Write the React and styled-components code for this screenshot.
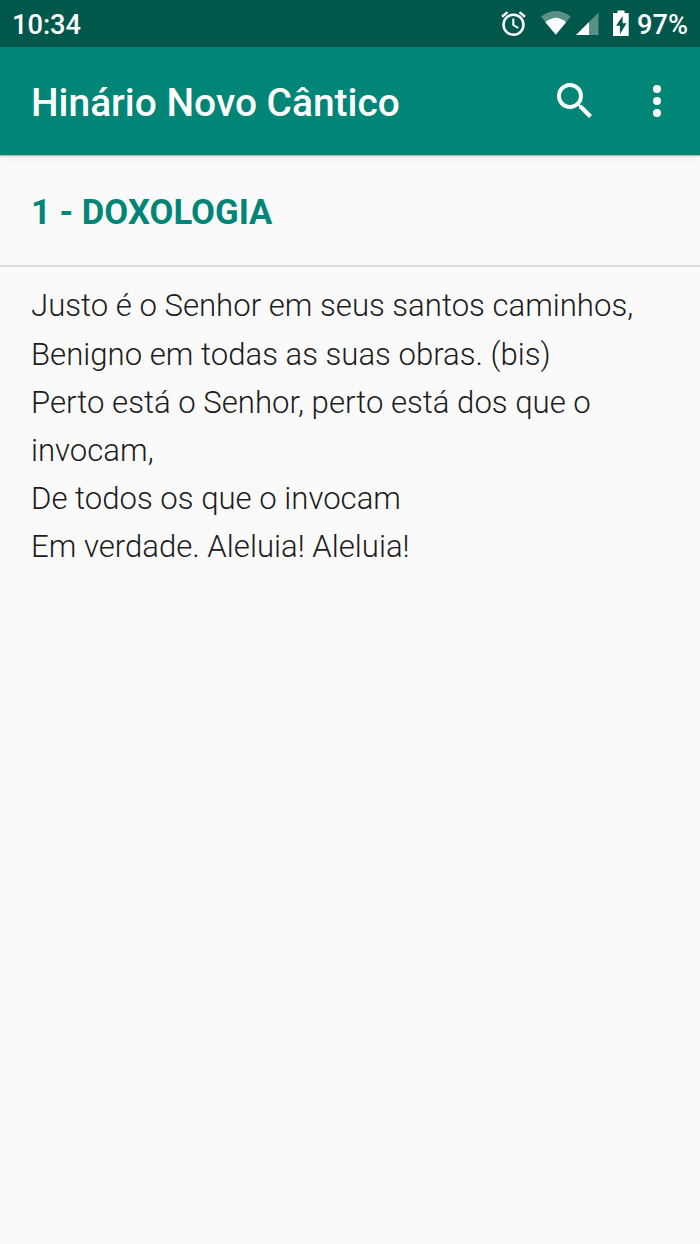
import styled, { createGlobalStyle } from 'styled-components';

const GlobalStyle = createGlobalStyle`
  body {
    margin: 0;
    background: #fafafa;
    font-family: Roboto, sans-serif;
  }
`;

const Screen = styled.div`
  display: flex;
  flex-direction: column;
  height: 1244px;
  overflow: hidden;
  background: #fafafa;
`;

// Barra de estado
const StatusBar = styled.div`
  display: flex;
  align-items: center;
  justify-content: space-between;
  height: 47px;
  padding: 0 12px;
  box-sizing: border-box;
  background: #00574b;
  color: #fff;
`;

const StatusText = styled.span`
  font-size: 27.2px;
  font-weight: 500;
  line-height: 47px;
  padding-top: 3px;
`;

const StatusIcons = styled.div`
  display: flex;
  align-items: center;

  svg {
    display: block;
  }
`;

const TopBar = styled.header`
  display: flex;
  align-items: center;
  height: 108px;
  padding: 0 19px 0 31px;
  box-sizing: border-box;
  background: #008577;
  color: #fff;
  box-shadow: 0 1px 1px rgba(0, 0, 0, 0.25), 0 2px 8px rgba(0, 0, 0, 0.08);
  z-index: 1;
`;

const Title = styled.h1`
  flex: 1;
  margin: 0;
  padding-top: 3px;
  font-size: 38.9px;
  font-weight: 500;
`;

const IconButton = styled.button`
  display: flex;
  padding: 0;
  margin-left: 34px;
  border: 0;
  background: none;
  color: #fff;
`;

// Título del himno
const HymnTitle = styled.h2`
  margin: 0;
  height: 112px;
  padding: 2px 31px 0;
  box-sizing: border-box;
  line-height: 111px;
  font-size: 34.7px;
  font-weight: 700;
  color: #008577;
  border-bottom: 2px solid #dcdcdc;
`;

const Lyrics = styled.div`
  padding: 15px 31px;
`;

const Line = styled.p`
  margin: 0;
  font-size: 31.13px;
  font-weight: 300;
  line-height: 48px;
  color: #1c1c1c;

  &:first-child {
    margin-bottom: 1px;
  }
`;

const lines = [
  'Justo é o Senhor em seus santos caminhos,',
  'Benigno em todas as suas obras. (bis)',
  'Perto está o Senhor, perto está dos que o invocam,',
  'De todos os que o invocam',
  'Em verdade. Aleluia! Aleluia!',
];

const StatusGlyphs = () => (
  <svg width="137" height="47" viewBox="500 0 137 47" fill="#fff">
    <g fill="none" stroke="#fff" strokeWidth="2.5">
      <circle cx="513.5" cy="24.7" r="10" />
      <path d="M513.300 18.500v6.500l5 3" strokeWidth="2" />
      <path d="M502 16.700l5.500-4.600M525 16.700l-5.500-4.600" />
    </g>
    <path d="M541 16.500Q555.800 5.500 570.800 16.500L566 22.300Q555.800 13 545.500 22.300Z" opacity="0.35" />
    <path d="M545.300 22.300Q555.800 13 566.200 22.300L555.800 34.700Z" />
    <path d="M598.500 12.500v22.500h-9.500v-13z" opacity="0.35" />
    <path d="M589 22v13h-13z" />
    <path d="M617.500 10.500h7v2.500h4.200v23h-15.700V13h4.500z" />
    <path d="M622.600 16v7.200h3.800l-6.500 11v-8.400h-3.800z" fill="#00574b" />
  </svg>
);

const SearchIcon = () => (
  <svg width="48" height="48" viewBox="0 0 24 24" fill="currentColor">
    <path d="M15.500 14h-.79l-.28-.27A6.471 6.471 0 0 0 16 9.500 6.500 6.500 0 1 0 9.500 16c1.610 0 3.090-.59 4.230-1.570l.27.28v.79l5 4.990L20.490 19l-4.990-5zm-6 0C7.010 14 5 11.990 5 9.500S7.010 5 9.500 5 14 7.010 14 9.500 11.990 14 9.500 14z" />
  </svg>
);

const MoreIcon = () => (
  <svg width="48" height="48" viewBox="0 0 24 24" fill="currentColor">
    <circle cx="12" cy="6" r="2" />
    <circle cx="12" cy="12" r="2" />
    <circle cx="12" cy="18" r="2" />
  </svg>
);

const App = () => {
  return (
    <>
      <GlobalStyle />
      <Screen>
        <StatusBar>
          <StatusText>10:34</StatusText>
          <StatusIcons>
            <StatusGlyphs />
            <StatusText>97%</StatusText>
          </StatusIcons>
        </StatusBar>
        <TopBar>
          <Title>Hinário Novo Cântico</Title>
          <IconButton aria-label="Buscar"><SearchIcon /></IconButton>
          <IconButton aria-label="Mais opções"><MoreIcon /></IconButton>
        </TopBar>
        <HymnTitle>1 - DOXOLOGIA</HymnTitle>
        <Lyrics>
          {lines.map((line) => <Line key={line}>{line}</Line>)}
        </Lyrics>
      </Screen>
    </>
  );
};

export default App;
